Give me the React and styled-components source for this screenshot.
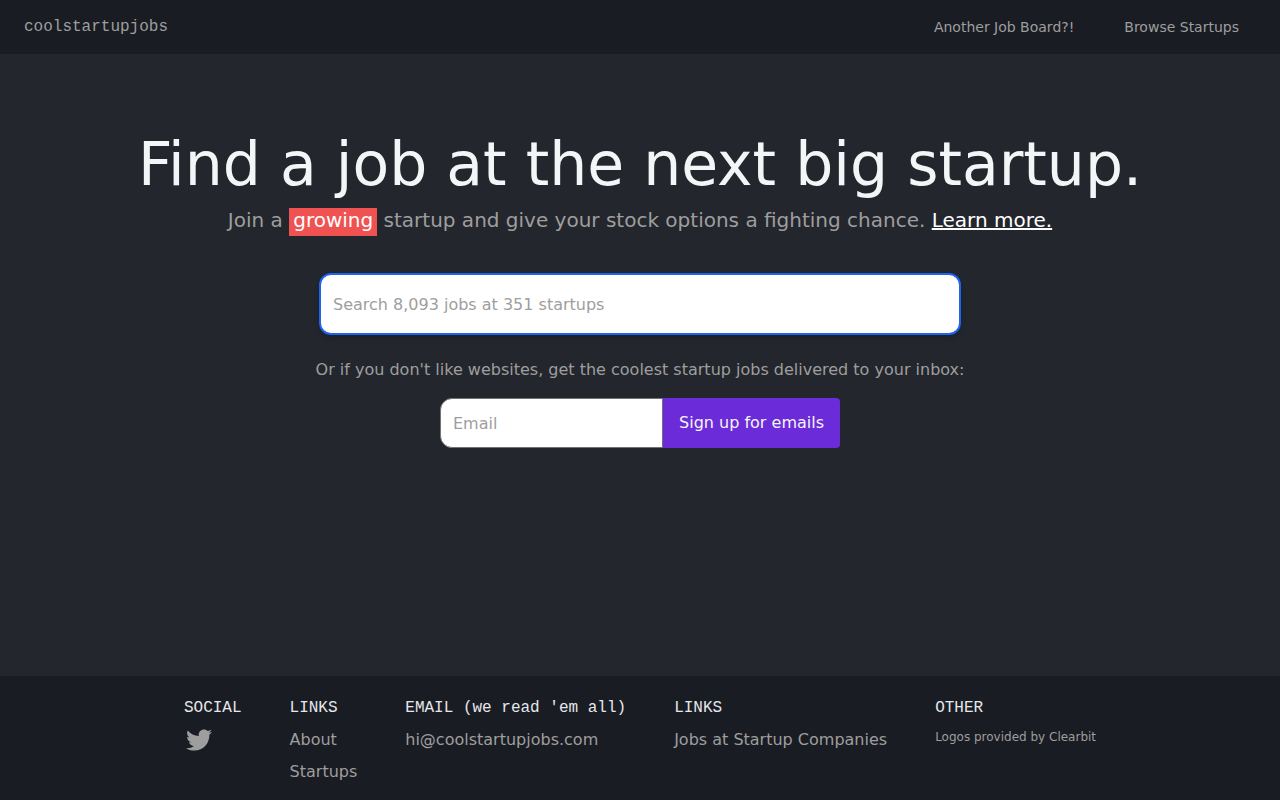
import React, { useState } from "react";
import styled, { createGlobalStyle } from "styled-components";
import { FaTwitter } from "react-icons/fa";

const GlobalStyle = createGlobalStyle`
  *, *::before, *::after {
    box-sizing: border-box;
  }
  body {
    margin: 0;
    background: #24262d;
    color: #9e9e9e;
    font-family: "DejaVu Sans", sans-serif;
    font-size: 16px;
    line-height: 24px;
  }
`;

const footerColumns = [
  { title: "LINKS", links: ["About", "Startups"] },
  { title: "EMAIL (we read 'em all)", links: ["hi@coolstartupjobs.com"] },
  { title: "LINKS", links: ["Jobs at Startup Companies"] },
];

const App = () => {
  const [search, setSearch] = useState("");
  const [email, setEmail] = useState("");

  return (
    <Page>
      <GlobalStyle />
      <Header>
        <Logo href="#">coolstartupjobs</Logo>
        <Nav>
          <NavLink href="#">Another Job Board?!</NavLink>
          <NavLink href="#">Browse Startups</NavLink>
        </Nav>
      </Header>
      <Main>
        <Title>Find a job at the next big startup.</Title>
        <Subtitle>
          Join a <Highlight>growing</Highlight> startup and give your stock
          options a fighting chance. <LearnMore href="#">Learn more.</LearnMore>
        </Subtitle>
        <SearchInput
          type="text"
          aria-label="Search jobs"
          placeholder="Search 8,093 jobs at 351 startups"
          value={search}
          onChange={(e) => setSearch(e.target.value)}
        />
        <Label htmlFor="email">
          Or if you don't like websites, get the coolest startup jobs delivered
          to your inbox:
        </Label>
        <SignupForm onSubmit={(e) => e.preventDefault()}>
          <EmailInput
            id="email"
            type="email"
            placeholder="Email"
            value={email}
            onChange={(e) => setEmail(e.target.value)}
          />
          <SignupButton type="submit">Sign up for emails</SignupButton>
        </SignupForm>
      </Main>
      <Footer>
        <Column>
          <ColumnTitle>SOCIAL</ColumnTitle>
          <SocialLink href="#" aria-label="Twitter">
            <FaTwitter size={26} aria-hidden="true" />
          </SocialLink>
        </Column>
        {footerColumns.map((column, i) => (
          <Column key={i}>
            <ColumnTitle>{column.title}</ColumnTitle>
            {column.links.map((link) => (
              <FooterLink key={link} href="#">
                {link}
              </FooterLink>
            ))}
          </Column>
        ))}
        <Column>
          <ColumnTitle>OTHER</ColumnTitle>
          <SmallLink href="#">Logos provided by Clearbit</SmallLink>
        </Column>
      </Footer>
    </Page>
  );
};

const Page = styled.div`
  display: flex;
  flex-direction: column;
  min-height: 100vh;
`;

const Header = styled.header`
  display: flex;
  align-items: center;
  justify-content: space-between;
  padding: 15px 24px;
  background: #1a1c23;
`;

const Logo = styled.a`
  color: #9e9e9e;
  font-family: "Liberation Mono", monospace;
  text-decoration: none;
`;

const Nav = styled.nav`
  display: flex;
  gap: 50px;
  padding-right: 17px;
`;

const NavLink = styled.a`
  color: #9e9e9e;
  font-size: 14px;
  text-decoration: none;
`;

const Main = styled.main`
  display: flex;
  flex: 1;
  flex-direction: column;
  align-items: center;
  padding: 73px 24px 48px;
  text-align: center;
`;

const Title = styled.h1`
  margin: 0;
  color: #f4f5f7;
  font-size: 60px;
  font-weight: 400;
  line-height: 75px;
`;

const Subtitle = styled.p`
  margin: 3px 0 38px;
  font-size: 20px;
  line-height: 30px;
`;

const Highlight = styled.span`
  padding: 0 4px 4px;
  background: #f05252;
  color: #ffffff;
`;

const LearnMore = styled.a`
  color: #ffffff;
`;

const Input = styled.input`
  border: 1px solid #707275;
  padding: 0 12px;
  background: #ffffff;
  color: #24262d;
  font: inherit;
  outline: none;

  &::placeholder {
    color: #9e9e9e;
    opacity: 1;
  }
`;

const SearchInput = styled(Input)`
  width: 100%;
  max-width: 642px;
  height: 62px;
  border: 2px solid #1c64f2;
  border-radius: 12px;
  box-shadow: 0 4px 6px -1px rgba(0, 0, 0, 0.1),
    0 2px 4px -1px rgba(0, 0, 0, 0.06);
`;

const Label = styled.label`
  margin: 23px 0 16px;
`;

const SignupForm = styled.form`
  display: flex;
  width: 100%;
  max-width: 400px;
`;

const EmailInput = styled(Input)`
  flex: 1;
  min-width: 0;
  height: 50px;
  border-radius: 12px 0 0 12px;
`;

const SignupButton = styled.button`
  border: 0;
  border-radius: 0 4px 4px 0;
  padding: 0 16px;
  background: #6c2bd9;
  color: #f4f5f7;
  font: inherit;
  cursor: pointer;
`;

const Footer = styled.footer`
  display: flex;
  flex-wrap: wrap;
  justify-content: center;
  gap: 24px 48px;
  padding: 20px 24px 16px;
  background: #1a1c23;
`;

const Column = styled.div`
  display: flex;
  flex-direction: column;
  align-items: flex-start;
  gap: 8px;
`;

const ColumnTitle = styled.h2`
  margin: 0;
  color: #e5e7eb;
  font-family: "Liberation Mono", monospace;
  font-size: 16px;
  font-weight: 400;
`;

const FooterLink = styled.a`
  color: #9e9e9e;
  text-decoration: none;
`;

const SmallLink = styled(FooterLink)`
  font-size: 12px;
  line-height: 18px;
`;

const SocialLink = styled.a`
  display: flex;
  align-items: center;
  height: 24px;
  padding: 0 2px;
  color: #9e9e9e;
`;

export default App;
